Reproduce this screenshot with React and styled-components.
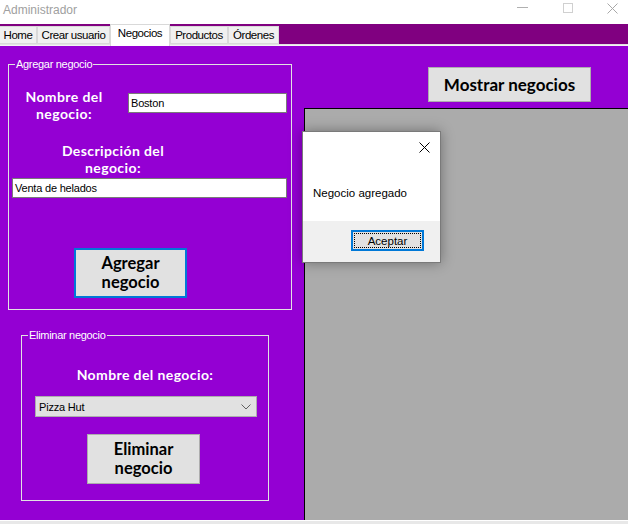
import React from "react";
import styled, { createGlobalStyle } from "styled-components";

const Global = createGlobalStyle`
  html, body { margin: 0; padding: 0; background: #ffffff; }
  * { box-sizing: border-box; }
`;

const VIOLET = "#9400d3";
const UI_FONT = `"Liberation Sans", Arial, sans-serif`;
const BOLD_FONT = `Lato, "Open Sans", sans-serif`;

const Root = styled.div`
  position: relative;
  width: 628px;
  height: 524px;
  overflow: hidden;
  font-family: ${UI_FONT};
  background: #ffffff;
`;

const TitleBar = styled.div`
  height: 24px;
  display: flex;
  align-items: center;
  background: #ffffff;
`;

const Title = styled.span`
  flex: 1;
  padding-left: 3px;
  font-size: 12px;
  color: #a0a0a0;
  margin-top: -4px;
`;

const WinControls = styled.div`
  display: flex;
  margin-right: -7px;
`;

const WinCtl = styled.span`
  width: 45px;
  height: 24px;
  display: flex;
  align-items: center;
  justify-content: center;
  margin-top: -8px;
`;

const TabStrip = styled.div`
  height: 20px;
  background: #800080;
  display: flex;
  align-items: flex-end;
`;

const Tab = styled.div`
  width: ${(p) => p.$w}px;
  height: ${(p) => (p.$active ? 22 : 18)}px;
  margin-bottom: ${(p) => (p.$active ? -2 : 0)}px;
  position: relative;
  z-index: ${(p) => (p.$active ? 2 : 1)};
  background: ${(p) => (p.$active ? "#ffffff" : "#f0f0f0")};
  border: 1px solid #d9d9d9;
  border-bottom: ${(p) => (p.$active ? "none" : "1px solid #d9d9d9")};
  border-left: ${(p) => (p.$first ? "none" : "1px solid #d9d9d9")};
  font-size: 11.5px;
  letter-spacing: -0.45px;
  color: #000;
  display: flex;
  align-items: ${(p) => (p.$active ? "flex-start" : "center")};
  padding-top: ${(p) => (p.$active ? 2 : 0)}px;
  justify-content: center;
`;

const TabRule = styled.div`
  height: 2px;
  background: #f4f4f4;
  border-top: 1px solid #e3e3e3;
`;

const Page = styled.div`
  height: 474px;
  background: ${VIOLET};
  display: flex;
`;

const LeftCol = styled.div`
  width: 304px;
  display: flex;
  flex-direction: column;
`;

const Group = styled.div`
  position: relative;
  width: ${(p) => p.$w}px;
  height: ${(p) => p.$h}px;
  margin: ${(p) => p.$mt}px 0 0 ${(p) => p.$ml}px;
  border: 1px solid #e2e2e2;
  display: flex;
  flex-direction: column;
  align-items: flex-start;
`;

const Legend = styled.span`
  position: absolute;
  left: 6px;
  top: -7px;
  padding: 0 1px;
  background: ${VIOLET};
  color: #ffffff;
  font-size: 11px;
  letter-spacing: -0.3px;
  line-height: 13px;
`;

const FieldRow = styled.div`
  display: flex;
  align-items: flex-start;
  margin-top: ${(p) => p.$mt}px;
`;

const Label = styled.div`
  width: ${(p) => (p.$w ? `${p.$w}px` : "100%")};
  margin-top: ${(p) => p.$mt || 0}px;
  font-family: ${BOLD_FONT};
  font-weight: 700;
  font-size: 14px;
  letter-spacing: 0.4px;
  line-height: 17px;
  color: #ffffff;
  text-align: center;
`;

const TextBox = styled.div`
  width: ${(p) => p.$w}px;
  height: 20px;
  margin: ${(p) => p.$mt || 0}px 0 0 ${(p) => p.$ml || 0}px;
  background: #ffffff;
  border: 1px solid #7a7a7a;
  font-size: 11px;
  letter-spacing: -0.2px;
  color: #000;
  padding: 0 2px;
  display: flex;
  align-items: center;
`;

const Combo = styled.div`
  width: 222px;
  height: 21px;
  margin: 13px 0 0 13px;
  background: #e1e1e1;
  border: 1px solid #adadad;
  font-size: 11px;
  letter-spacing: -0.2px;
  padding: 0 5px 0 3px;
  display: flex;
  align-items: center;
  justify-content: space-between;
`;

const BigButton = styled.div`
  width: ${(p) => p.$w}px;
  height: ${(p) => p.$h}px;
  margin: ${(p) => p.$mt}px 0 0 ${(p) => p.$ml}px;
  background: #e1e1e1;
  border: ${(p) => (p.$focus ? "2px solid #0078d7" : "1px solid #adadad")};
  font-family: ${BOLD_FONT};
  font-weight: 700;
  font-size: ${(p) => p.$fs || 16.5}px;
  line-height: 19px;
  color: #000;
  text-align: center;
  display: flex;
  align-items: center;
  justify-content: center;
  flex-shrink: 0;
`;

const RightCol = styled.div`
  flex: 1;
  display: flex;
  flex-direction: column;
  align-items: flex-start;
`;

const Viewer = styled.div`
  align-self: stretch;
  flex: 1;
  margin-top: 6px;
  background: #ababab;
  border-left: 1px solid #000;
  border-top: 1px solid #000;
`;

const BottomEdge = styled.div`
  height: 4px;
  background: #e8e8e8;
  border-top: 1px solid #ffffff;
`;

const MessageBox = styled.div`
  position: absolute;
  left: 302px;
  top: 131px;
  width: 139px;
  height: 132px;
  background: #ffffff;
  border: 1px solid #7a7a7a;
  box-shadow: 0 0 12px rgba(0, 0, 0, 0.35);
  display: flex;
  flex-direction: column;
  z-index: 10;
`;

const MsgTop = styled.div`
  height: 89px;
  display: flex;
  flex-direction: column;
`;

const MsgClose = styled.div`
  align-self: flex-end;
  width: 22px;
  height: 22px;
  margin: 4px 5px 0 0;
  display: flex;
  align-items: center;
  justify-content: center;
`;

const MsgText = styled.div`
  margin: 29px 0 0 10px;
  font-size: 11.5px;
  color: #000;
`;

const MsgFooter = styled.div`
  flex: 1;
  background: #f0f0f0;
  display: flex;
  justify-content: flex-end;
  align-items: flex-start;
  padding: 9px 16px 0 0;
`;

const OkButton = styled.div`
  width: 73px;
  height: 21px;
  border: 2px solid #0078d7;
  background: #e1e1e1;
  padding: 1px;
  display: flex;
`;

const OkInner = styled.div`
  flex: 1;
  border: 1px dotted #000;
  font-size: 11.5px;
  display: flex;
  align-items: center;
  justify-content: center;
`;

const tabs = [
  { t: "Home", w: 37 },
  { t: "Crear usuario", w: 73 },
  { t: "Negocios", w: 60, active: true },
  { t: "Productos", w: 58 },
  { t: "Órdenes", w: 51 },
];

export default function App() {
  return (
    <Root>
      <Global />
      <TitleBar>
        <Title>Administrador</Title>
        <WinControls>
          <WinCtl>
            <svg width="11" height="2"><rect x="0" y="0" width="11" height="1" fill="#b0b0b0" /></svg>
          </WinCtl>
          <WinCtl>
            <svg width="10" height="10"><rect x="0.5" y="0.5" width="9" height="9" fill="none" stroke="#d0d0d0" /></svg>
          </WinCtl>
          <WinCtl>
            <svg width="11" height="11"><path d="M0.5 0.5 L10.5 10.5 M10.5 0.5 L0.5 10.5" stroke="#a8a8a8" strokeWidth="1" /></svg>
          </WinCtl>
        </WinControls>
      </TitleBar>
      <TabStrip>
        {tabs.map((tb, i) => (
          <Tab key={tb.t} $w={tb.w} $active={tb.active} $first={i === 0}>
            {tb.t}
          </Tab>
        ))}
      </TabStrip>
      <TabRule />
      <Page>
        <LeftCol>
          <Group $w={284} $h={246} $mt={18} $ml={8}>
            <Legend>Agregar negocio</Legend>
            <FieldRow $mt={23}>
              <Label $w={110}>Nombre del<br />negocio:</Label>
              <TextBox $w={159} $ml={9} $mt={5}>Boston</TextBox>
            </FieldRow>
            <Label $w={208} $mt={20}>Descripción del<br />negocio:</Label>
            <TextBox $w={275} $ml={3} $mt={2}>Venta de helados</TextBox>
            <BigButton $focus $w={113} $h={50} $mt={50} $ml={65}>
              Agregar<br />negocio
            </BigButton>
          </Group>
          <Group $w={248} $h={166} $mt={25} $ml={21}>
            <Legend>Eliminar negocio</Legend>
            <Label $mt={30}>Nombre del negocio:</Label>
            <Combo>
              <span>Pizza Hut</span>
              <svg width="10" height="6">
                <path d="M0.5 0.5 L5 5 L9.5 0.5" fill="none" stroke="#606060" strokeWidth="1" />
              </svg>
            </Combo>
            <BigButton $w={113} $h={50} $mt={17} $ml={65}>
              Eliminar<br />negocio
            </BigButton>
          </Group>
        </LeftCol>
        <RightCol>
          <BigButton $w={163} $h={35} $mt={21} $ml={124} $fs={17}>
            Mostrar negocios
          </BigButton>
          <Viewer />
        </RightCol>
      </Page>
      <BottomEdge />
      <MessageBox>
        <MsgTop>
          <MsgClose>
            <svg width="11" height="11"><path d="M0.5 0.5 L10.5 10.5 M10.5 0.5 L0.5 10.5" stroke="#000" strokeWidth="1" /></svg>
          </MsgClose>
          <MsgText>Negocio agregado</MsgText>
        </MsgTop>
        <MsgFooter>
          <OkButton>
            <OkInner>Aceptar</OkInner>
          </OkButton>
        </MsgFooter>
      </MessageBox>
    </Root>
  );
}
